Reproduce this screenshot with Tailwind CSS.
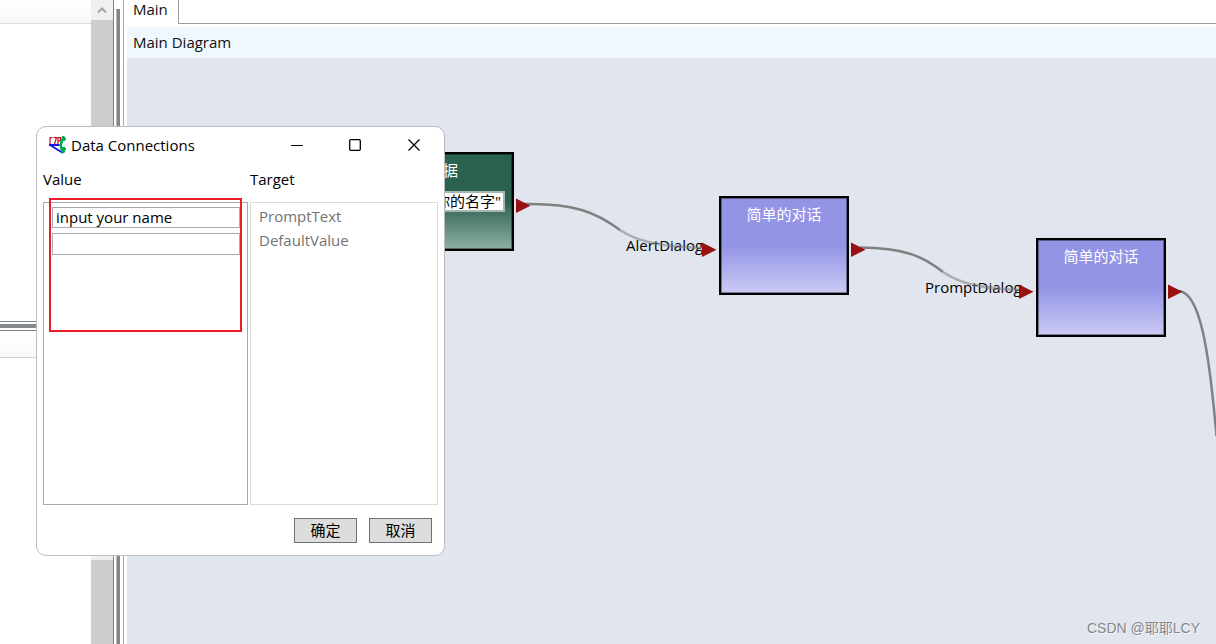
<!DOCTYPE html>
<html lang="zh-CN">
<head>
<meta charset="utf-8">
<title>Main Diagram</title>
<script src="https://cdn.jsdelivr.net/npm/@tailwindcss/browser@4"></script>
</head>
<body class="relative flex h-screen overflow-hidden bg-white font-['Open_Sans','Noto_Sans_CJK_SC',sans-serif] text-[15px] leading-5 text-[#111]">

<!-- Left tool panels -->
<aside class="flex w-[114px] shrink-0 flex-col border-r border-[#7c8086]">
  <section class="flex h-1/2 border-b border-[#7c8086]">
    <div class="flex-1">
      <div class="h-6 border-b border-[#dcdcdc] bg-linear-to-b from-white to-[#f7f8f8]"></div>
    </div>
    <div class="flex w-[22px] flex-col bg-[#cdcdcd]">
      <button aria-label="Scroll up" class="flex h-5 items-center justify-center bg-[#f0f0f0]">
        <svg width="10" height="7" viewBox="0 0 10 7" fill="none" stroke="#a3a3a3" stroke-width="2"><path d="M1 5.5 5 1.5l4 4"/></svg>
      </button>
    </div>
  </section>
  <div class="my-0.5 h-1 shrink-0 bg-[#868a8f]"></div>
  <section class="flex flex-1 border-t border-[#7c8086] pt-px">
    <div class="flex-1">
      <div class="h-[26px] border-b border-[#d3d3d3] bg-linear-to-b from-white to-[#f7f8f8]"></div>
    </div>
    <div class="flex w-[22px] flex-col bg-[#f0f0f0] pt-[228px]">
      <div class="flex-1 bg-[#cdcdcd]"></div>
    </div>
  </section>
</aside>

<div class="flex w-[9px] shrink-0 pt-[9px] pl-0.5"><div class="w-1 border-l border-[#b4b6b6] bg-[#838786]"></div></div>

<!-- Document area -->
<main class="flex min-w-0 flex-1 flex-col border-l border-[#a6a8ab]">
  <nav class="flex h-6 shrink-0">
    <a href="#diagram" class="h-6 w-[55px] border-r border-[#9a9ca0] pl-[9px] leading-[18px]">Main</a>
    <div class="flex-1 border-b border-[#9a9ca0]"></div>
  </nav>
  <h1 class="mt-[3px] ml-[3px] shrink-0 bg-[#eff7ff] py-[5px] pl-1.5 leading-[21px]">Main Diagram</h1>
  <div id="diagram" class="relative ml-[3px] flex-1 overflow-hidden bg-[#e0e5ee]">

    <div class="absolute top-[94px] left-[257px] h-[99px] w-[130px] border-2 border-black bg-linear-to-b from-[#2a6150] from-50% to-[#8fb0a4] text-right shadow-[inset_0_0_0_1px_#00000066]">
      <div class="mt-1.5 pr-[54px] text-white">据</div>
      <input aria-label="Value" value="你的名字&quot;" class="mt-[11px] mr-[7px] ml-auto block h-[21px] w-[80px] border-2 border-[#a9b5b1] bg-white pr-0.5 pb-0.5 text-right leading-4 text-black">
    </div>
    <div class="absolute top-[138px] left-[592px] h-[99px] w-[130px] border-2 border-black bg-linear-to-b from-[#9494e6] from-50% to-[#cbcaf4] pt-1.5 text-center text-white shadow-[inset_0_0_0_1px_#00000066]">简单的对话</div>
    <div class="absolute top-[180px] left-[909px] h-[99px] w-[130px] border-2 border-black bg-linear-to-b from-[#9494e6] from-50% to-[#cbcaf4] pt-1.5 text-center text-white shadow-[inset_0_0_0_1px_#00000066]">简单的对话</div>

    <div class="absolute top-[177px] left-[499px] text-black">AlertDialog</div>
    <div class="absolute top-[219px] left-[798px] text-black">PromptDialog</div>

    <svg class="absolute top-0 left-0 size-full" fill="none" stroke-width="2.5">
      <g transform="translate(-127 -58)">
        <g stroke="#808080">
          <path d="M524 204C575 203 597 213 620 230"/>
          <path d="M860 247.500C905 247.500 924 257 943 272"/>
          <path d="M1178 291C1200 291 1209 350 1216.500 436"/>
        </g>
        <g stroke="#808080" stroke-opacity=".55">
          <path d="M620 230C636 241 660 247 706 248"/>
          <path d="M943 272C959 283 980 289 1023 290"/>
        </g>
        <path fill="#991111" d="M516 198.500v14.500l14.500-7.200zM702 242.500v14.500l14.500-7.200zM851 242.500v14.500l14.500-7.200zM1019 284.500v14.500l14.500-7.200zM1168 284.500v14.500l14.500-7.200z"/>
      </g>
    </svg>

    <div class="absolute right-4 bottom-1.5 font-['Liberation_Sans','Noto_Sans_CJK_SC',sans-serif] text-sm text-[#85888e] [text-shadow:1px_1px_0_#f4f6fa]">CSDN @耶耶LCY</div>
  </div>
</main>

<!-- Dialog window -->
<section role="dialog" aria-labelledby="dialog-title" class="absolute top-[126px] left-9 flex h-[430px] w-[409px] flex-col rounded-[10px] border border-[#b9bcc1] bg-white px-1.5 text-black">
  <header class="flex h-9 shrink-0 items-center pl-1.5">
    <svg width="17" height="18" viewBox="0 0 17 18" fill="none">
      <path stroke="#1515f0" stroke-width="2" d="M0 9h12M1 9l13 8"/>
      <path stroke="#c41220" stroke-width="1.200" d="M1 1.600v6.400M1 1.600h2.500M4.500 1.600h3L5.500 8M9 8V1.600h2.500v3.200H9"/>
      <path fill="#00ad4e" d="M13 0h2l1 1v1h1v2h-1v1h-2v2l-1 1v2l1 1h2v1h1v2h-1v2l-1 1h-2l-1-1v-2l-1-1v-3h-1V8h1V5l1-1z"/>
    </svg>
    <h2 id="dialog-title" class="ml-[5px] flex-1">Data Connections</h2>
    <button aria-label="Minimize" class="w-[58px]"><svg class="mx-auto" width="12" height="12" stroke="#000"><path d="M0 6.500h12"/></svg></button>
    <button aria-label="Maximize" class="w-[58px]"><svg class="mx-auto" width="12" height="12" fill="none" stroke="#000" stroke-width="1.300"><rect x=".7" y=".7" width="10.600" height="10.600" rx="1"/></svg></button>
    <button aria-label="Close" class="-mr-1.5 w-[60px]"><svg class="mx-auto" width="12" height="12" stroke="#000" stroke-width="1.200"><path d="m.5.5 11 11M11.500.5l-11 11"/></svg></button>
  </header>
  <div class="flex flex-1 gap-0.5">
    <div class="flex w-[205px] flex-col">
      <h3 class="mt-1.5 mb-[13px]">Value</h3>
      <div class="relative flex flex-1 flex-col gap-[5px] border border-[#a7a9b1] px-2 pt-1">
        <input aria-label="PromptText" value="input your name" class="h-[21px] w-[188px] border border-[#a9abb4] pb-0.5 pl-[3px]">
        <input aria-label="DefaultValue" class="h-[22px] w-[188px] border border-[#a9abb4] pb-0.5 pl-[3px]">
        <div class="absolute -top-[5px] left-[5px] h-[134px] w-[193px] border-2 border-[#ee1c25]"></div>
      </div>
    </div>
    <div class="flex flex-1 flex-col">
      <h3 class="mt-1.5 mb-[13px]">Target</h3>
      <ul class="flex-1 border border-[#dadbdc] pt-px pl-2 leading-6 text-[#737373]">
        <li>PromptText</li>
        <li>DefaultValue</li>
      </ul>
    </div>
  </div>
  <footer class="flex justify-end gap-3 py-3 pt-[13px] pr-1.5">
    <button class="h-[25px] w-[63px] border border-[#707070] bg-[#dddddd] pb-0.5">确定</button>
    <button class="h-[25px] w-[63px] border border-[#707070] bg-[#dddddd] pb-0.5">取消</button>
  </footer>
</section>
</body>
</html>
